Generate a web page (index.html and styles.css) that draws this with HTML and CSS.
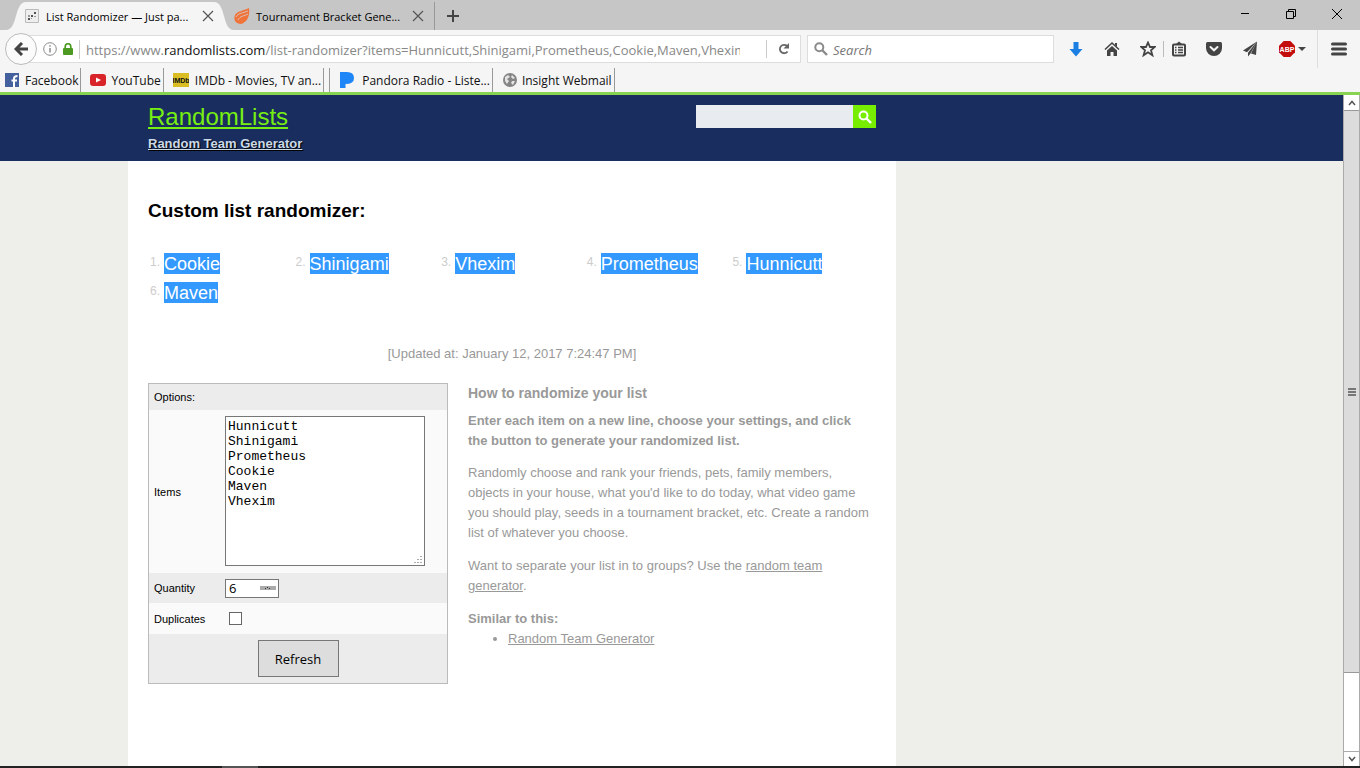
FILE: index.html
```html
<!DOCTYPE html>
<html lang="en">
<head>
<meta charset="utf-8">
<title>List Randomizer</title>
<link rel="stylesheet" href="styles.css">
</head>
<body>
<header class="browser">
  <div class="tabs">
    <div class="tab tab-active">
      <svg class="tab-curve" viewBox="0 0 20 28" width="20" height="28"><path d="M0 28C12 28 8 0 20 0V28Z" fill="#f5f5f5"/></svg>
      <div class="tab-body">
        <svg class="favicon" viewBox="0 0 14 14" width="14" height="14"><path d="M0 0H14V14H0Z" fill="#fff"/><path d="M.5 13.500V.5H13.500V13.500Z" fill="#eee" stroke="#bbb"/><g fill="#555"><rect x="3" y="9" width="2" height="2"/><rect x="6" y="6" width="2" height="2"/><rect x="9" y="3" width="2" height="2"/></g><g fill="#999"><rect x="3" y="6" width="2" height="2"/><rect x="9" y="7" width="2" height="1"/><rect x="6" y="9" width="1" height="1"/></g></svg>
        <span class="tab-title">List Randomizer — Just pa...</span>
        <button class="plain" aria-label="Close tab"><svg viewBox="0 0 12 12" width="12" height="12"><path d="M1 1L11 11M11 1L1 11" stroke="#555" stroke-width="1.200"/></svg></button>
      </div>
      <svg class="tab-curve" viewBox="0 0 20 28" width="20" height="28"><path d="M20 28C8 28 12 0 0 0V28Z" fill="#f5f5f5"/></svg>
    </div>
    <div class="tab tab-idle">
      <svg viewBox="0 0 16 16" width="16" height="16"><path d="M15 0C16 7 14 14 7 16C2 16-1 12 1 7C3 3 9 3 15 0Z" fill="#f0733a"/><path d="M14 3C9 5 4 5 2 9M14 6C10 8 6 8 4 12" stroke="#d8c4ba" stroke-width="1" fill="none"/></svg>
      <span class="tab-title">Tournament Bracket Gene...</span>
      <button class="plain" aria-label="Close tab"><svg viewBox="0 0 12 12" width="12" height="12"><path d="M1 1L11 11M11 1L1 11" stroke="#555" stroke-width="1.200"/></svg></button>
    </div>
    <button class="plain new-tab" aria-label="New tab"><svg viewBox="0 0 12 12" width="12" height="12"><path d="M6 0V12M0 6H12" stroke="#444" stroke-width="2"/></svg></button>
    <div class="window-buttons">
      <button class="plain" aria-label="Minimize"><svg viewBox="0 0 10 10" width="10" height="10"><path d="M1 4.500H9" stroke="#000"/></svg></button>
      <button class="plain" aria-label="Restore"><svg viewBox="0 0 10 10" width="10" height="10"><path d="M.5 2.500H7.500V9.500H.5ZM2.500 2V.5H9.500V7.500H8" stroke="#000" fill="none"/></svg></button>
      <button class="plain" aria-label="Close"><svg viewBox="0 0 10 10" width="10" height="10"><path d="M0 0L10 10M10 0L0 10" stroke="#000"/></svg></button>
    </div>
  </div>

  <nav class="toolbar">
    <button class="plain back" aria-label="Back"><svg viewBox="0 0 14 14" width="14" height="14"><path d="M8 1L2 7L8 13M2 7H14" stroke="#444" stroke-width="3" fill="none"/></svg></button>
    <div class="address">
      <svg viewBox="0 0 14 14" width="14" height="14"><circle cx="7" cy="7" r="6.300" stroke="#8a8a8a" fill="none"/><path d="M7 6V10.500M7 3.300V4.800" stroke="#8a8a8a" stroke-width="1.500"/></svg>
      <svg viewBox="0 0 10 12" width="10" height="12"><path d="M2.200 6V3.500A2.800 2.800 0 0 1 7.800 3.500V6" stroke="#4c9a22" stroke-width="1.700" fill="none"/><rect y="5" width="10" height="7" rx="1" fill="#4c9a22"/></svg>
      <div class="url" role="textbox" aria-label="Address" contenteditable="true" spellcheck="false">https://www.<span class="domain">randomlists.com</span>/list-randomizer?items=Hunnicutt,Shinigami,Prometheus,Cookie,Maven,Vhexim</div>
      <button class="plain reload" aria-label="Reload"><svg viewBox="0 0 12 12" width="12" height="12"><path d="M9.500 8.500A4.200 4.200 0 1 1 9 3" stroke="#666" stroke-width="1.800" fill="none"/><path d="M11 0V5.500H5.500Z" fill="#666"/></svg></button>
    </div>
    <label class="search">
      <svg viewBox="0 0 14 14" width="14" height="14"><circle cx="5.300" cy="5.300" r="4" stroke="#8a8a8a" stroke-width="2" fill="none"/><path d="M8.500 8.500L13 13" stroke="#8a8a8a" stroke-width="2.400"/></svg>
      <input type="text" placeholder="Search" aria-label="Search">
    </label>
    <div class="tools">
      <button class="plain" aria-label="Downloads"><svg viewBox="0 0 16 16" width="16" height="16"><path d="M5.500 1H10.500V8H14.500L8 15.500L1.500 8H5.500Z" fill="#1b7fe3"/></svg></button>
      <button class="plain" aria-label="Home"><svg viewBox="0 0 16 16" width="16" height="16"><path d="M1 8.500L8 2L15 8.500" stroke="#444" stroke-width="1.600" fill="none"/><path d="M3 9.500L8 5L13 9.500V15H9.500V11H6.500V15H3ZM11 2H13V6L11 4Z" fill="#444"/></svg></button>
      <button class="plain" aria-label="Bookmark"><svg viewBox="0 0 16 16" width="16" height="16"><path d="M8 1.500L10 6H14.700L11 9.200L12.400 14.300L8 11.300L3.600 14.300L5 9.200L1.300 6H6Z" stroke="#444" stroke-width="1.800" fill="none"/></svg></button>
      <button class="plain listing" aria-label="Bookmarks list"><svg viewBox="0 0 14 16" width="14" height="16"><rect x="1" y="3.500" width="12" height="11" rx="1" stroke="#444" stroke-width="2" fill="none"/><path d="M4 3L7 .5L10 3Z" fill="#444"/><path d="M3 6.500H4.500M6 6.500H11M3 9H4.500M6 9H11M3 11.500H4.500M6 11.500H11" stroke="#444" stroke-width="1.300"/></svg></button>
      <button class="plain" aria-label="Pocket"><svg viewBox="0 0 16 16" width="16" height="16"><path d="M1.500 1H14.500Q16 1 16 2.500V7A8 8 0 0 1 0 7V2.500Q0 1 1.500 1Z" fill="#444"/><path d="M4.500 6L8 9.300L11.500 6" stroke="#f5f5f5" stroke-width="2" fill="none" stroke-linecap="round"/></svg></button>
      <button class="plain" aria-label="Send"><svg viewBox="0 0 16 16" width="16" height="16"><path d="M15 .5L1 9.500L5 11.200ZM15 .5L6 11.700V15.500L8.500 12.500ZM15 .5L9 12.500L14 14Z" fill="#444"/></svg></button>
      <button class="plain adblock" aria-label="Adblock Plus"><svg viewBox="0 0 16 16" width="16" height="16"><path d="M4.700 0H11.300L16 4.700V11.300L11.300 16H4.700L0 11.300V4.700Z" fill="#c40d0d"/><text x="8" y="11" text-anchor="middle" class="abp-label">ABP</text></svg><svg viewBox="0 0 8 4" width="8" height="4"><path d="M0 0H8L4 4Z" fill="#444"/></svg></button>
      <button class="plain menu" aria-label="Menu"><svg viewBox="0 0 16 14" width="16" height="14"><path d="M1.500 2H14.500M1.500 7H14.500M1.500 12H14.500" stroke="#444" stroke-width="3" stroke-linecap="round"/></svg></button>
    </div>
  </nav>

  <div class="bookmarks">
    <a class="bookmark" href="#"><svg viewBox="0 0 14 14" width="14" height="14"><rect width="14" height="14" fill="#45619d"/><path d="M9 14V8.500M9 9V5.500Q9 3 12.500 3M6.500 7.500H12" stroke="#fff" stroke-width="2" fill="none"/></svg>Facebook</a>
    <a class="bookmark bm-youtube" href="#"><svg viewBox="0 0 16 12" width="16" height="12"><rect width="16" height="12" rx="3" fill="#d9252a"/><path d="M6 3.500L11 6L6 8.500Z" fill="#fff"/></svg>YouTube</a>
    <a class="bookmark bm-imdb" href="#"><svg viewBox="0 0 16 14" width="16" height="14"><rect width="16" height="14" fill="#d9bd22"/><text x="8" y="10" text-anchor="middle" class="imdb-label">IMDb</text></svg>IMDb - Movies, TV an...</a>
    <a class="bookmark bm-pandora" href="#"><svg viewBox="0 0 14 16" width="14" height="16"><path d="M0 0H7Q14 0 14 6Q14 12 5.500 12V16H0Z" fill="#1e86f7"/></svg>Pandora Radio - Liste...</a>
    <a class="bookmark bm-insight" href="#"><svg viewBox="0 0 14 14" width="14" height="14"><circle cx="7" cy="7" r="7" fill="#858585"/><path d="M2 4L5 2L7 4L4 6L6 8L4 11L2 8ZM9 2L12 5L10 6L8 4ZM9 8L12 8L10 12L8 10Z" fill="#e3e3e3"/></svg>Insight Webmail</a>
  </div>
</header>

<div class="viewport">
  <div class="page">
    <header class="site-header">
      <div class="site-inner">
        <div class="brand">
          <a class="brand-name" href="#">RandomLists</a>
          <a class="brand-sub" href="#">Random Team Generator</a>
        </div>
        <form class="site-search">
          <input type="text" aria-label="Search site">
          <button type="button" aria-label="Search site"><svg viewBox="0 0 14 14" width="14" height="14"><circle cx="5.500" cy="5.500" r="4" stroke="#fff" stroke-width="2" fill="none"/><path d="M8.500 8.500L13 13" stroke="#fff" stroke-width="2.400"/></svg></button>
        </form>
      </div>
    </header>

    <main class="content">
      <h1>Custom list randomizer:</h1>
      <ol class="results">
        <li><span class="num">1.</span><span class="picked">Cookie</span></li>
        <li><span class="num">2.</span><span class="picked">Shinigami</span></li>
        <li><span class="num">3.</span><span class="picked">Vhexim</span></li>
        <li><span class="num">4.</span><span class="picked">Prometheus</span></li>
        <li><span class="num">5.</span><span class="picked">Hunnicutt</span></li>
        <li><span class="num">6.</span><span class="picked">Maven</span></li>
      </ol>
      <p class="updated">[Updated at: January 12, 2017 7:24:47 PM]</p>
      <div class="columns">
        <form class="options">
          <div class="row row-title">Options:</div>
          <div class="row row-items"><label for="items">Items</label>
            <div class="items-box">
<textarea id="items" spellcheck="false">Hunnicutt
Shinigami
Prometheus
Cookie
Maven
Vhexim</textarea>
              <svg class="grip" viewBox="0 0 8 8" width="8" height="8"><path d="M6 0H8V1H6ZM3 3H5V4H3ZM6 3H8V4H6ZM0 6H2V7H0ZM3 6H5V7H3ZM6 6H8V7H6Z" fill="#aaa"/></svg>
            </div>
          </div>
          <div class="row row-quantity"><label for="qty">Quantity</label><span class="qty"><input id="qty" type="text" value="6"><svg viewBox="0 0 16 4" width="16" height="4"><rect width="16" height="4" fill="#aaa"/><path d="M5 2H6V3H5ZM7 1H8V2H7ZM9 2H10V3H9Z" fill="#333"/></svg></span></div>
          <div class="row row-duplicates"><label for="dup">Duplicates</label><input id="dup" type="checkbox"></div>
          <div class="row row-submit"><button type="button">Refresh</button></div>
        </form>
        <section class="help">
          <h2>How to randomize your list</h2>
          <p class="lead">Enter each item on a new line, choose your settings, and click the button to generate your randomized list.</p>
          <p>Randomly choose and rank your friends, pets, family members, objects in your house, what you'd like to do today, what video game you should play, seeds in a tournament bracket, etc. Create a random list of whatever you choose.</p>
          <p>Want to separate your list in to groups? Use the <a href="#">random team generator</a>.</p>
          <h3>Similar to this:</h3>
          <ul><li><a href="#">Random Team Generator</a></li></ul>
        </section>
      </div>
    </main>
  </div>
  <div class="scrollbar">
    <span class="scroll-end"><svg viewBox="0 0 8 6" width="8" height="6"><path d="M1 5L4 1.500L7 5" stroke="#555" stroke-width="1.500" fill="none"/></svg></span>
    <span class="thumb"><svg viewBox="0 0 8 8" width="8" height="8"><path d="M0 1H8M0 4H8M0 7H8" stroke="#555" stroke-width="1.600"/></svg></span>
    <span class="track"></span>
    <span class="scroll-end scroll-down"><svg viewBox="0 0 8 6" width="8" height="6"><path d="M1 1L4 4.500L7 1" stroke="#555" stroke-width="1.500" fill="none"/></svg></span>
  </div>
</div>
<div class="taskbar"><span class="task"></span></div>
</body>
</html>
```
FILE: styles.css
```css
* { box-sizing: border-box; }
body {
  margin: 0;
  height: 100vh;
  display: flex;
  flex-direction: column;
  overflow: hidden;
  font-family: "Liberation Sans", Arial, sans-serif;
  background: #eeefeb;
}
svg { display: block; flex: none; }
.plain {
  display: flex;
  align-items: center;
  justify-content: center;
  padding: 0;
  border: 0;
  background: none;
}
.browser {
  font-family: "Open Sans", "Noto Sans", sans-serif;
  font-size: 12px;
  color: #111;
  background: #f5f5f5;
  border-bottom: 3px solid #88d352;
}
.tabs {
  display: flex;
  height: 30px;
  padding: 2px 18px 0 6px;
  background: #c6c6c6;
}
.tab { display: flex; height: 28px; font-size: 11px; color: #000; }
.tab-body {
  display: flex;
  align-items: center;
  width: 188px;
  background: #f5f5f5;
}
.favicon { margin-left: -1px; }
.tab-title { flex: 1; white-space: nowrap; }
.tab-body .tab-title { margin-left: 7px; }
.tab-idle { align-items: center; width: 201px; padding-right: 10px; border-right: 1px solid #999; }
.tab-idle .tab-title { margin-left: 6px; }
.new-tab { width: 36px; }
.window-buttons { display: flex; gap: 36px; margin-left: auto; padding-bottom: 4px; }

.toolbar {
  display: flex;
  align-items: center;
  height: 38px;
  padding: 0 13px 0 5px;
}
.back {
  z-index: 1;
  width: 32px;
  height: 32px;
  border: 1px solid #bbb;
  border-radius: 16px;
  background: #fbfbfb;
}
.address {
  display: flex;
  flex: 1;
  align-items: center;
  gap: 6px;
  min-width: 0;
  height: 28px;
  margin-left: -8px;
  padding-left: 13px;
  border: 1px solid #ddd;
  background: #fff;
}
.url {
  flex: 1;
  min-width: 0;
  margin-right: 20px;
  padding-top: 1px;
  padding-left: 6px;
  border-left: 1px solid #ccc;
  font-size: 13px;
  line-height: 18px;
  color: #888;
  white-space: nowrap;
  overflow: hidden;
}
.domain { color: #111; }
.reload { width: 34px; height: 18px; border-left: 1px solid #ccc; }
.search {
  display: flex;
  align-items: center;
  width: 247px;
  height: 28px;
  margin-left: 6px;
  padding-left: 6px;
  border: 1px solid #ddd;
  background: #fff;
}
.search input {
  flex: 1;
  min-width: 0;
  padding: 1px 0 0 5px;
  border: 0;
  background: none;
  font: italic 13px "Open Sans", sans-serif;
}
.search input::placeholder { color: #777; opacity: 1; }
.tools { display: flex; align-items: center; height: 38px; padding-left: 14px; gap: 20px; }
.listing { height: 16px; margin-left: -13px; padding-left: 8px; border-left: 1px solid #bbb; }
.adblock { gap: 3px; margin-left: 1px; }
.abp-label { font: bold 7px "Liberation Sans", sans-serif; fill: #fff; }
.menu { height: 38px; margin-left: -9px; padding-left: 13px; border-left: 1px solid #ddd; }

.bookmarks { display: flex; height: 24px; padding-left: 5px; }
.bookmark {
  display: flex;
  align-items: center;
  gap: 6px;
  padding-right: 2px;
  border-right: 1px solid #999;
  color: #111;
  text-decoration: none;
  white-space: nowrap;
}
.bm-youtube { padding-left: 9px; gap: 5px; }
.bm-imdb { padding-left: 9px; gap: 6px; }
.bm-pandora { margin-left: 5px; padding-left: 10px; gap: 8px; border-left: 1px solid #999; }
.bm-insight { padding-left: 10px; gap: 5px; }
.imdb-label { font: bold 7px "Liberation Sans Narrow", "Liberation Sans", sans-serif; fill: #111; }

.viewport { display: flex; flex: 1; min-height: 0; }
.page { display: flex; flex-direction: column; flex: 1; overflow: hidden; }
.site-header { background: #192e5e; }
.site-inner {
  display: flex;
  justify-content: space-between;
  align-items: flex-start;
  max-width: 768px;
  height: 66px;
  margin-left: 128px;
  padding: 10px 20px 0;
}
.brand { display: flex; flex-direction: column; align-items: flex-start; }
.brand-name { font-size: 24px; line-height: 24px; color: #77ee11; }
.brand-sub { margin-top: 7px; font-size: 13px; line-height: 16px; font-weight: bold; color: #ccd9e6; text-shadow: 1px 1px 1px #000; }
.site-search { display: flex; height: 23px; }
.site-search input { width: 157px; padding: 0 4px; border: 0; background: #e8ebf0; }
.site-search button {
  display: flex;
  align-items: center;
  justify-content: center;
  width: 23px;
  padding: 0;
  border: 0;
  background: #77ee00;
}
.content {
  flex: 1;
  max-width: 768px;
  width: 100%;
  margin-left: 128px;
  padding: 38px 20px 0;
  background: #fff;
}
h1 { margin: 0; font-size: 19px; line-height: 24px; color: #000; }
.results {
  display: grid;
  grid-template-columns: repeat(5, 1fr);
  row-gap: 8px;
  margin: 30px 0 0;
  padding: 0;
  list-style: none;
}
.results li { display: flex; }
.num { width: 16px; padding-left: 2px; font-size: 12px; line-height: 18px; color: #ccc; }
.picked { padding-top: 1px; background: #3399ff; color: #fff; font-size: 18px; line-height: 20px; }
.updated { margin: 41px 0 0; font-size: 13px; line-height: 20px; color: #999; text-align: center; }
.columns { display: flex; gap: 20px; align-items: flex-start; margin-top: 19px; }
.options { width: 300px; border: 1px solid #bbb; font-size: 11px; color: #000; }
.row { display: flex; align-items: center; padding-left: 5px; background: #ececec; }
.row label { width: 71px; }
.row-title { height: 26px; }
.row-items { height: 163px; background: #fafafa; }
.items-box { position: relative; padding-bottom: 1px; }
.row-items textarea {
  display: block;
  width: 200px;
  height: 150px;
  padding: 2px;
  border: 1px solid #777;
  background: #fff;
  color: #000;
  font: 13px/15px "Liberation Mono", monospace;
  resize: none;
}
.grip { position: absolute; right: 3px; bottom: 3px; }
.row-quantity { height: 30px; }
.qty { display: flex; align-items: center; width: 54px; height: 19px; padding: 0 2px 0 3px; border: 1px solid #777; background: #fff; }
.qty input { flex: 1; min-width: 0; padding: 0; border: 0; background: none; font: 13px "Open Sans", sans-serif; }
.row-duplicates { height: 31px; background: #fafafa; }
.row-duplicates input { appearance: none; width: 13px; height: 13px; margin: 0 0 0 4px; border: 1px solid #666; background: #fff; }
.row-submit { height: 49px; justify-content: center; padding: 0; }
.row-submit button { width: 81px; height: 37px; border: 1px solid #777; background: #ddd; color: #000; font: 13px "Open Sans", sans-serif; }
.help { flex: 1; font-size: 13px; line-height: 20px; color: #999; }
.help h2 { margin: 0 0 8px; font-size: 14px; line-height: 20px; }
.help h3 { margin: 0; font-size: 13px; line-height: 20px; }
.help p { margin: 0 0 13px; }
.help .lead { margin-bottom: 12px; padding-right: 12px; font-weight: bold; }
.help a { color: #999; }
.help ul { margin: 0; padding-left: 40px; }

.scrollbar { display: flex; flex-direction: column; width: 17px; border-left: 1px solid #aaa; border-right: 1px solid #aaa; background: #fff; }
.scroll-end { display: flex; align-items: center; justify-content: center; height: 15px; }
.scroll-down { border-top: 1px solid #aaa; }
.thumb { display: flex; flex: 562; align-items: center; justify-content: center; border: solid #999; border-width: 1px 0; background: #dcdcdc; }
.track { flex: 78; }
.taskbar { display: flex; height: 2px; padding-left: 222px; background: #222; }
.task { width: 36px; background: #555; }
```
